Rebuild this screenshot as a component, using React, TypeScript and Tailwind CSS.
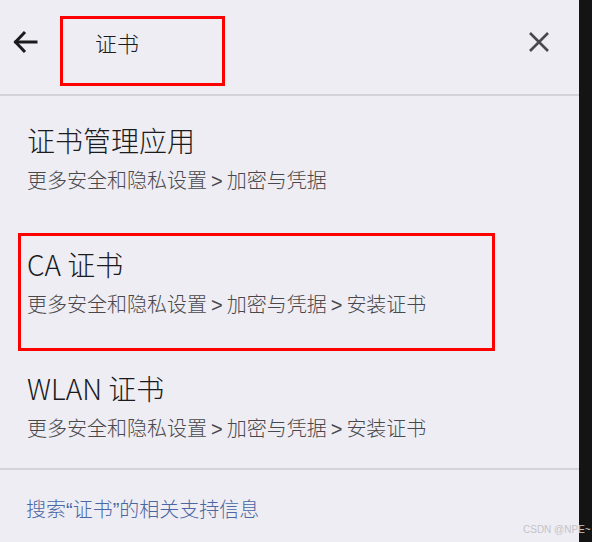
import React from "react";

const font = { fontFamily: '"Noto Sans CJK SC", "Noto Sans", sans-serif' };
const lat = { fontFamily: '"Liberation Sans", sans-serif' };

function Sep() {
  return (
    <span className="mx-[4px]" style={lat}>
      &gt;
    </span>
  );
}

function Item({ title, parts }: { title: React.ReactNode; parts: string[] }) {
  return (
    <div className="pl-[27px] pt-[26px] pb-[25px]">
      <div className="text-[28px] leading-[36px] text-[#1b1b1d] font-light">{title}</div>
      <div className="mt-[8px] text-[20px] leading-[28px] text-[#48484c] font-light whitespace-nowrap">
        {parts.map((p, i) => (
          <React.Fragment key={i}>
            {i > 0 && <Sep />}
            {p}
          </React.Fragment>
        ))}
      </div>
    </div>
  );
}

export default function App() {
  return (
    <div className="relative w-[592px] h-[542px] flex overflow-hidden" style={font}>
      <div className="relative w-[579px] h-full bg-[#eeedf3] flex flex-col">
        <div className="h-[94px] flex items-start pt-[30px]">
          <div className="ml-[13px] w-[26px] h-[24px] flex items-center justify-center">
            <svg width="26" height="24" viewBox="0 0 26 24" fill="none" stroke="#1b1b1d" strokeWidth="3" strokeLinecap="square">
              <path d="M3 12 H23" />
              <path d="M12 2 L2.5 12 L12 22" strokeLinecap="butt" />
            </svg>
          </div>
          <div className="ml-[56px] text-[22px] leading-[24px] text-[#1b1b1d] font-light">证书</div>
          <div className="ml-auto mr-[29px] mt-[1px] w-[22px] h-[22px]">
            <svg width="22" height="22" viewBox="0 0 22 22" fill="none" stroke="#48484e" strokeWidth="2.6">
              <path d="M2 2 L20 20 M20 2 L2 20" />
            </svg>
          </div>
        </div>
        <div className="h-[2px] bg-[#d4d3d9]" />
        <Item title="证书管理应用" parts={["更多安全和隐私设置", "加密与凭据"]} />
        <Item title="CA 证书" parts={["更多安全和隐私设置", "加密与凭据", "安装证书"]} />
        <Item title="WLAN 证书" parts={["更多安全和隐私设置", "加密与凭据", "安装证书"]} />
        <div className="h-[2px] bg-[#d4d3d9]" />
        <div className="pl-[26px] pt-[25px] text-[20px] leading-[28px] text-[#4a67a3] font-light whitespace-nowrap">
          搜索<span style={lat}>“</span>证书<span style={lat}>”</span>的相关支持信息
        </div>

        <div className="absolute left-[60px] top-[16px] w-[165px] h-[70px] border-[3px] border-[#ff0000]" />
        <div className="absolute left-[18px] top-[233px] w-[477px] h-[118px] border-[3px] border-[#ff0000]" />
      </div>
      <div className="flex-1 h-full bg-[#141414]" />
      <div
        className="absolute left-[523px] top-[523px] text-[10px] leading-[14px] text-[#c4c4c8] whitespace-nowrap"
        style={lat}
      >
        CSDN @NPE~
      </div>
    </div>
  );
}
